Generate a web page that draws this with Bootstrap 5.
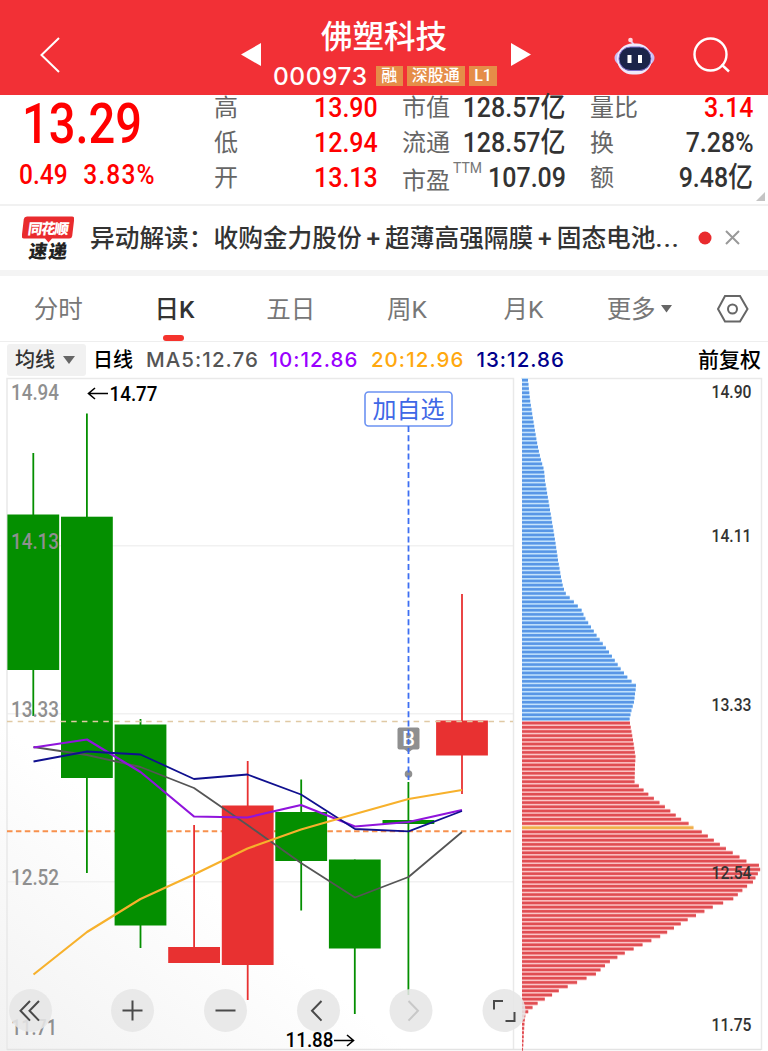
<!DOCTYPE html>
<html lang="zh-CN">
<head>
<meta charset="utf-8">
<meta name="viewport" content="width=device-width, initial-scale=1">
<title>佛塑科技 000973</title>
<link href="https://cdn.jsdelivr.net/npm/bootstrap@5.3.0/dist/css/bootstrap.min.css" rel="stylesheet">
<style>
  body { font-family: Roboto, "Noto Sans CJK SC", sans-serif; color: #333; background: #fff; width: 768px; height: 1051px; overflow: hidden; }
  svg { display: block; flex: none; }
  .topbar { height: 95px; background: #f23036; color: #fff; }
  .side-l { width: 262px; padding-left: 40px; }
  .stock-title { width: 244px; padding-top: 18px; }
  .stock-name { font-size: 31.5px; line-height: 40px; font-weight: 500; }
  .stock-line { padding-left: 11px; height: 36px; }
  .stock-code { font: 500 24.5px/30px Inter, sans-serif; letter-spacing: .55px; margin-right: 8.5px; }
  .tag { background: #e58d48; font-size: 16px; line-height: 19px; height: 20px; padding: 0 5.2px; font-weight: 500; margin-right: 4px; white-space: nowrap; }
  .narrow { display: inline-block; transform: scaleX(.875); transform-origin: right center; white-space: nowrap; }
  .narrow.lead-edge { transform-origin: left center; }
  .quote { height: 111px; border-bottom: 2px solid #f1f1f1; }
  .price-box { width: 214px; padding-left: 19px; }
  .price { font-size: 56px; line-height: 56px; margin: 1px 0 0 3px; transform: scaleX(.84); }
  .change { font-size: 28px; line-height: 36px; margin-top: 5px; }
  .change-pct { letter-spacing: 1.3px; margin-left: 18px; }
  .rise { color: #f00; font-weight: 500; }
  .facts { width: 163.5px; margin: -5px 24.5px 0 0; }
  .fact { height: 35.2px; line-height: 35.2px; font-size: 28.5px; font-weight: 500; white-space: nowrap; display: flex; justify-content: space-between; }
  .fact-name { font-size: 24px; color: #666; font-weight: 400; width: 50px; flex: none; padding-top: 1px; }
  .fact .narrow { flex: none; }
  .fact > :last-child { margin-left: -60px; }
  .ttm { font-size: 14px; line-height: 14px; color: #777; margin: 1px auto 0 1px; font-weight: 400; width: 26px; flex: none; }
  .news { height: 64px; font-size: 24.7px; font-weight: 500; padding-left: 22px; }
  .news-text { margin-left: 16px; width: 590px; white-space: nowrap; padding-top: 1px; }
  .plus { display: inline-block; width: 23.5px; text-align: center; }
  .dots { letter-spacing: 1.3px; }
  .band { height: 6px; background: #f4f4f4; }
  .tabs { height: 66px; border-bottom: 1px solid #eee; font-size: 24.5px; color: #777; }
  .tab { width: 116.3px; line-height: 68px; height: 65px; text-align: center; white-space: nowrap; }
  .tab.on { color: #333; font-weight: 500; position: relative; }
  .tab.on::after { content: ""; position: absolute; left: 47px; bottom: 0; width: 21px; height: 6px; border-radius: 3px; background: #f5332d; }
  .mas { height: 35px; padding: 2px 7px 0; font: 500 20.5px/32px Inter, "Noto Sans CJK SC", sans-serif; letter-spacing: 1.05px; color: #000; }
  .pick { width: 79px; height: 32px; background: #f1f1f1; border-radius: 3px; padding-left: 8px; color: #333; }
  .cjk { font-size: 20px; letter-spacing: 0; }
  .day-line { margin-left: 7px; }
  .adjust { font-size: 21px; }
  .ma5 { color: #555; margin-left: 13px; }
  .ma10 { color: #90f; margin-left: 10.5px; }
  .ma20 { color: #ffa80e; margin-left: 12.5px; }
  .ma13 { color: #00008b; margin-left: 12px; }
  .chart text { font-family: Roboto, "Noto Sans CJK SC", sans-serif; font-weight: 500; }
  .chart .plain { font-weight: 400; }
</style>
</head>
<body>
<header class="topbar d-flex">
  <div class="side-l d-flex justify-content-between">
    <svg width="22" height="95"><path d="M19 38 1.500 55 19 72" fill="none" stroke="#fff" stroke-width="2"/></svg>
    <svg width="21" height="95"><path d="M20 43v23L0 54.500z" fill="#fff"/></svg>
  </div>
  <div class="stock-title">
    <div class="stock-name text-center">佛塑科技</div>
    <div class="stock-line d-flex align-items-center">
      <span class="stock-code">000973</span><span class="tag">融</span><span class="tag">深股通</span><span class="tag">L1</span>
    </div>
  </div>
  <svg width="262" height="95" fill="none">
    <path d="M5 43v23l20-11.500z" fill="#fff"/>
    <g transform="translate(-506)">
      <path d="m634 45-3-4" stroke="#e7c3e8" stroke-width="2"/><circle cx="630.500" cy="40" r="2.300" fill="#ffd9e2"/>
      <ellipse cx="634.500" cy="58" rx="20" ry="11" fill="#cbbdf4"/>
      <rect x="617" y="43.500" width="35" height="31" rx="15.500" fill="#efe9fb"/>
      <rect x="619" y="47" width="32" height="23.500" rx="11.500" fill="#1b2449" stroke="#7c6fca" stroke-width="1"/>
      <path d="M629.500 55v8M640 55v8" stroke="#fff" stroke-width="4"/>
      <circle cx="710.500" cy="54.500" r="16" stroke="#fff" stroke-width="2.400"/><path d="m721.500 64.500 7.500 7" stroke="#fff" stroke-width="2.400"/>
    </g>
  </svg>
</header>

<section class="quote d-flex">
  <div class="price-box">
    <div class="price rise narrow lead-edge">13.29</div>
    <div class="change rise narrow lead-edge">0.49<span class="change-pct">3.83%</span></div>
  </div>
  <div class="facts">
    <div class="fact"><span class="fact-name">高</span><span class="rise narrow">13.90</span></div>
    <div class="fact"><span class="fact-name">低</span><span class="rise narrow">12.94</span></div>
    <div class="fact"><span class="fact-name">开</span><span class="rise narrow">13.13</span></div>
  </div>
  <div class="facts">
    <div class="fact"><span class="fact-name">市值</span><span class="narrow">128.57亿</span></div>
    <div class="fact"><span class="fact-name">流通</span><span class="narrow">128.57亿</span></div>
    <div class="fact"><span class="fact-name pt-1">市盈</span><span class="ttm">TTM</span><span class="narrow">107.09</span></div>
  </div>
  <div class="facts me-0">
    <div class="fact"><span class="fact-name">量比</span><span class="rise narrow">3.14</span></div>
    <div class="fact"><span class="fact-name">换</span><span class="narrow">7.28%</span></div>
    <div class="fact"><span class="fact-name">额</span><span class="narrow">9.48亿</span></div>
  </div>
  <svg width="12" height="109"><path d="M11 97v9H2z" fill="#c4c4c4"/></svg>
</section>

<section class="news d-flex align-items-center">
  <svg width="52" height="48" viewBox="22 213 52 48">
    <path d="M27 215.500h45q2.500 0 2.200 2.500l-2 17q-.4 2.500-3 2.500H52l-3.500 4-3.500-4H24q-2.500 0-2.200-2.500l2-17q.4-2.500 3.200-2.500z" fill="#e92b2e"/>
    <g transform="skewX(-8)" font-family="Noto Sans CJK SC, sans-serif" font-weight="900">
      <text x="60" y="233" font-size="14.500" textLength="41" fill="#fff">同花顺</text>
      <text x="64" y="257" font-size="18.500" fill="#222">速</text>
      <text x="84" y="257" font-size="18.500" fill="#222">递</text>
    </g>
  </svg>
  <div class="news-text">异动解读：收购金力股份<span class="plus">+</span>超薄高强隔膜<span class="plus">+</span>固态电池<span class="dots">...</span></div>
  <svg width="60" height="24"><circle cx="25" cy="12" r="6.500" fill="#e92b2e"/><path d="m46 5 13 13m0-13L46 18" stroke="#999" stroke-width="2"/></svg>
</section>
<div class="band"></div>

<nav class="tabs d-flex">
  <div class="tab">分时</div><div class="tab on">日K</div><div class="tab">五日</div><div class="tab">周K</div><div class="tab">月K</div>
  <div class="tab d-flex justify-content-center">更多<svg class="align-self-center ms-1" width="13" height="9"><path d="M1 1h11L6.500 8.500z" fill="#666"/></svg></div>
  <svg class="align-self-center ms-auto me-3" width="40" height="32" fill="none" stroke="#666" stroke-width="2"><path d="M13 3h15l7.500 13-7.500 12.500H13L6 16z"/><circle cx="20.500" cy="16" r="4.500"/></svg>
</nav>

<div class="mas d-flex">
  <div class="pick d-flex align-items-center"><span class="cjk">均线</span><svg class="ms-2" width="12" height="8"><path d="M0 0h12L6 8z" fill="#666"/></svg></div>
  <span class="cjk day-line">日线</span>
  <span class="ma5">MA5:12.76</span>
  <span class="ma10">10:12.86</span>
  <span class="ma20">20:12.96</span>
  <span class="ma13">13:12.86</span>
  <span class="cjk adjust ms-auto">前复权</span>
</div>

<svg class="chart" width="768" height="674" viewBox="0 377 768 674">
  <defs><linearGradient id="shade" x1="0" y1="1" x2=".5" y2=".5"><stop offset="0" stop-color="#f2f2f2"/><stop offset=".8" stop-color="#fff"/></linearGradient></defs>
  <rect y="640" width="514" height="411" fill="url(#shade)"/>
  <path d="M7 545.800H513M7 713.800H513M7 881.800H513" stroke="#f1f1f1" stroke-width="1.500"/>
  <path d="M7 1050V378.500H513.500V1050M521 378.500H761.500V1050" fill="none" stroke="#e9e9e9" stroke-width="1.500"/>
  <path d="M7 1049.500H761" stroke="#e3e3e3" stroke-width="1.500"/>
  <path d="M7 831.300H513" stroke="#f7914d" stroke-width="2" stroke-dasharray="5.500 3.400"/>
  <g id="candles"></g>
  <path d="M7 721.500H513" stroke="#e0c9a4" stroke-width="1.500" stroke-dasharray="5.500 5.200"/>
  <g fill="none" stroke-width="1.800" stroke-linejoin="round">
    <path stroke="#555" d="M33.500 747 87 755 140.500 767 194 788 247.500 825 301 863 355 897.500 408.500 877 462 832"/>
    <path stroke="#9014dc" stroke-width="2.200" d="M33.500 747.500 87 739.500 140.500 772 194 816.500 247.500 817.500 301 805 355 826.500 408.500 822 462 810"/>
    <path stroke="#10108f" d="M33.500 761.500 87 751.500 140.500 754.500 194 779 247.500 774.500 301 794.500 355 829 408.500 831.300 462 811"/>
    <path stroke="#f7b12c" stroke-width="2.200" d="M33.500 974.500 87 932 140.500 899 194 874.500 247.500 848.500 301 829.500 355 814 408.500 799 462 790"/>
  </g>
  <g id="profile"></g>
  <g fill="#8f8f8f" font-size="21.500">
    <text x="11" y="399.500" textLength="48" lengthAdjust="spacingAndGlyphs">14.94</text>
    <text x="11" y="549" textLength="48" lengthAdjust="spacingAndGlyphs">14.13</text>
    <text x="11" y="717" textLength="48" lengthAdjust="spacingAndGlyphs">13.33</text>
    <text x="11" y="885" textLength="48" lengthAdjust="spacingAndGlyphs">12.52</text>
    <text x="11" y="1035" textLength="46" lengthAdjust="spacingAndGlyphs">11.71</text>
  </g>
  <g fill="#333" font-size="18.500">
    <text x="711.500" y="397.500" textLength="40" lengthAdjust="spacingAndGlyphs">14.90</text>
    <text x="711.500" y="542" textLength="40" lengthAdjust="spacingAndGlyphs">14.11</text>
    <text x="711.500" y="710.500" textLength="40" lengthAdjust="spacingAndGlyphs">13.33</text>
    <text x="711.500" y="878.500" textLength="40" lengthAdjust="spacingAndGlyphs">12.54</text>
    <text x="711.500" y="1030.500" textLength="40" lengthAdjust="spacingAndGlyphs">11.75</text>
  </g>
  <g fill="#000" font-size="21">
    <text x="109.500" y="400.500" textLength="48" lengthAdjust="spacingAndGlyphs">14.77</text>
    <text x="285.500" y="1047" textLength="48" lengthAdjust="spacingAndGlyphs">11.88</text>
    <path d="M108 393.500H89M95 388l-6.500 5.500 6.500 5.500M334 1040.500h19M347 1035l6.500 5.500-6.500 5.500" fill="none" stroke="#000" stroke-width="1.600"/>
  </g>
  <rect x="365" y="392" width="87" height="34" rx="3.500" fill="#fff" stroke="#6c92f2" stroke-width="1.600"/>
  <text class="plain" x="408.500" y="418" text-anchor="middle" font-size="24" fill="#3f68e6">加自选</text>
  <rect x="397.500" y="727.500" width="22" height="22" rx="2" fill="#8f8f8f"/><path d="m404 749 4.500 3.500 4.500-3.500z" fill="#8f8f8f"/>
  <text x="408.500" y="746" text-anchor="middle" font-size="20" fill="#fff">B</text>
  <circle cx="408.500" cy="774" r="3.800" fill="#8f8f8f"/>
  <path d="M408.500 426V780" stroke="#3e6ff2" stroke-width="1.800" stroke-dasharray="6 3.200"/>
  <g fill="#e6e6e6" fill-opacity=".88">
    <circle cx="30.500" cy="1010.500" r="21.500"/><circle cx="132.500" cy="1010.500" r="21.500"/><circle cx="225.500" cy="1010.500" r="21.500"/>
    <circle cx="318.500" cy="1010.500" r="21.500"/><circle cx="411" cy="1010.500" r="21.500"/><circle cx="504" cy="1010.500" r="21.500"/>
  </g>
  <g fill="none" stroke="#4a4a4a" stroke-width="2">
    <path d="M30 1001l-9.500 9.800 9.500 9.800M39 1001l-9.500 9.800 9.500 9.800M122.500 1010.500h20M132.500 1000.500v20M215.500 1010.500h20M321.500 1001l-9.500 9.800 9.500 9.800M494 1009.500v-8.500h9M514.500 1012v9h-9"/>
    <path stroke="#c8c8c8" d="M408.500 1001l9.500 9.800-9.500 9.800"/>
  </g>
</svg>

<script>
  // x centre, body top, body bottom, wick top, wick bottom, rising
  const candles = [
    [33.3, 514.5, 670, 453, 716, 0], [86.9, 516.7, 778, 413.5, 873, 0], [140.5, 724.5, 925.5, 719, 948, 0],
    [194.1, 947, 963, 825, 948, 1], [247.7, 805.5, 965, 761, 1000, 1], [301.2, 812, 861, 779.5, 910.5, 0],
    [354.8, 859.5, 948.5, 859.5, 1014, 0], [408.4, 820, 824, 782, 995, 0], [462, 720.5, 755.5, 594, 794, 1]
  ];
  document.getElementById('candles').innerHTML = candles.map(([x, t, b, h, l, up]) => {
    const c = up ? '#e83131' : '#048f00';
    return `<path d="M${x} ${h}V${l}" stroke="${c}" stroke-width="1.8"/><rect x="${x - 25.9}" y="${t}" width="51.8" height="${b - t}" fill="${c}"/>`;
  }).join('');

  // holding-cost outline: price level y, right edge x
  const outline = [[380,528],[400,530],[419,533],[440,536.5],[452,539],[460,541],[470,544],[481,545],[510,550],[540,555],[560,558],[577,561],[587,563],[594,566],[602,574],[610,581.5],[618,585],[636,597],[652,609],[668,620],[678,628],[686,636.5],[690,635.5],[702,634],[712,631],[719.3,629.5],[723.6,630],[740,633],[757,635.5],[765,635],[782,634.5],[786,639],[794,648],[803,660],[820,682],[823,688],[827.7,693.5],[832,702],[848,725],[861,746],[866,761],[870,760],[882,753],[887,746],[899,733],[907,713],[920,687],[936,661],[945,642],[953,625],[962,609],[974,596],[982,578],[990,560],[995,552],[1003,538],[1007,533],[1011,529],[1014,525.5],[1022,524.5],[1050,523]];
  const edge = y => {
    for (let i = 1; i < outline.length; i++) {
      const [y0, x0] = outline[i - 1], [y1, x1] = outline[i];
      if (y <= y1) return x0 + (x1 - x0) * (y - y0) / (y1 - y0);
    }
    return 523;
  };
  const pitch = 4.182, average = 107;
  let bars = '';
  for (let i = 0; i <= 160; i++) {
    const y = 380.2 + i * pitch, w = edge(y) - 522;
    const [c, s] = i === average ? ['#f0ae4a', '#fbe0b5'] : y < 721.5 ? ['#5896e6', '#b4dafa'] : ['#e04d52', '#f8b4b6'];
    bars += `<rect x="522" y="${y - 2.09}" width="${w}" height="${pitch}" fill="${s}"/><rect x="522" y="${y - 1.25}" width="${w}" height="2.5" fill="${c}"/>`;
  }
  document.getElementById('profile').innerHTML = bars;
</script>
<script src="https://cdn.jsdelivr.net/npm/bootstrap@5.3.0/dist/js/bootstrap.bundle.min.js"></script>
</body>
</html>
